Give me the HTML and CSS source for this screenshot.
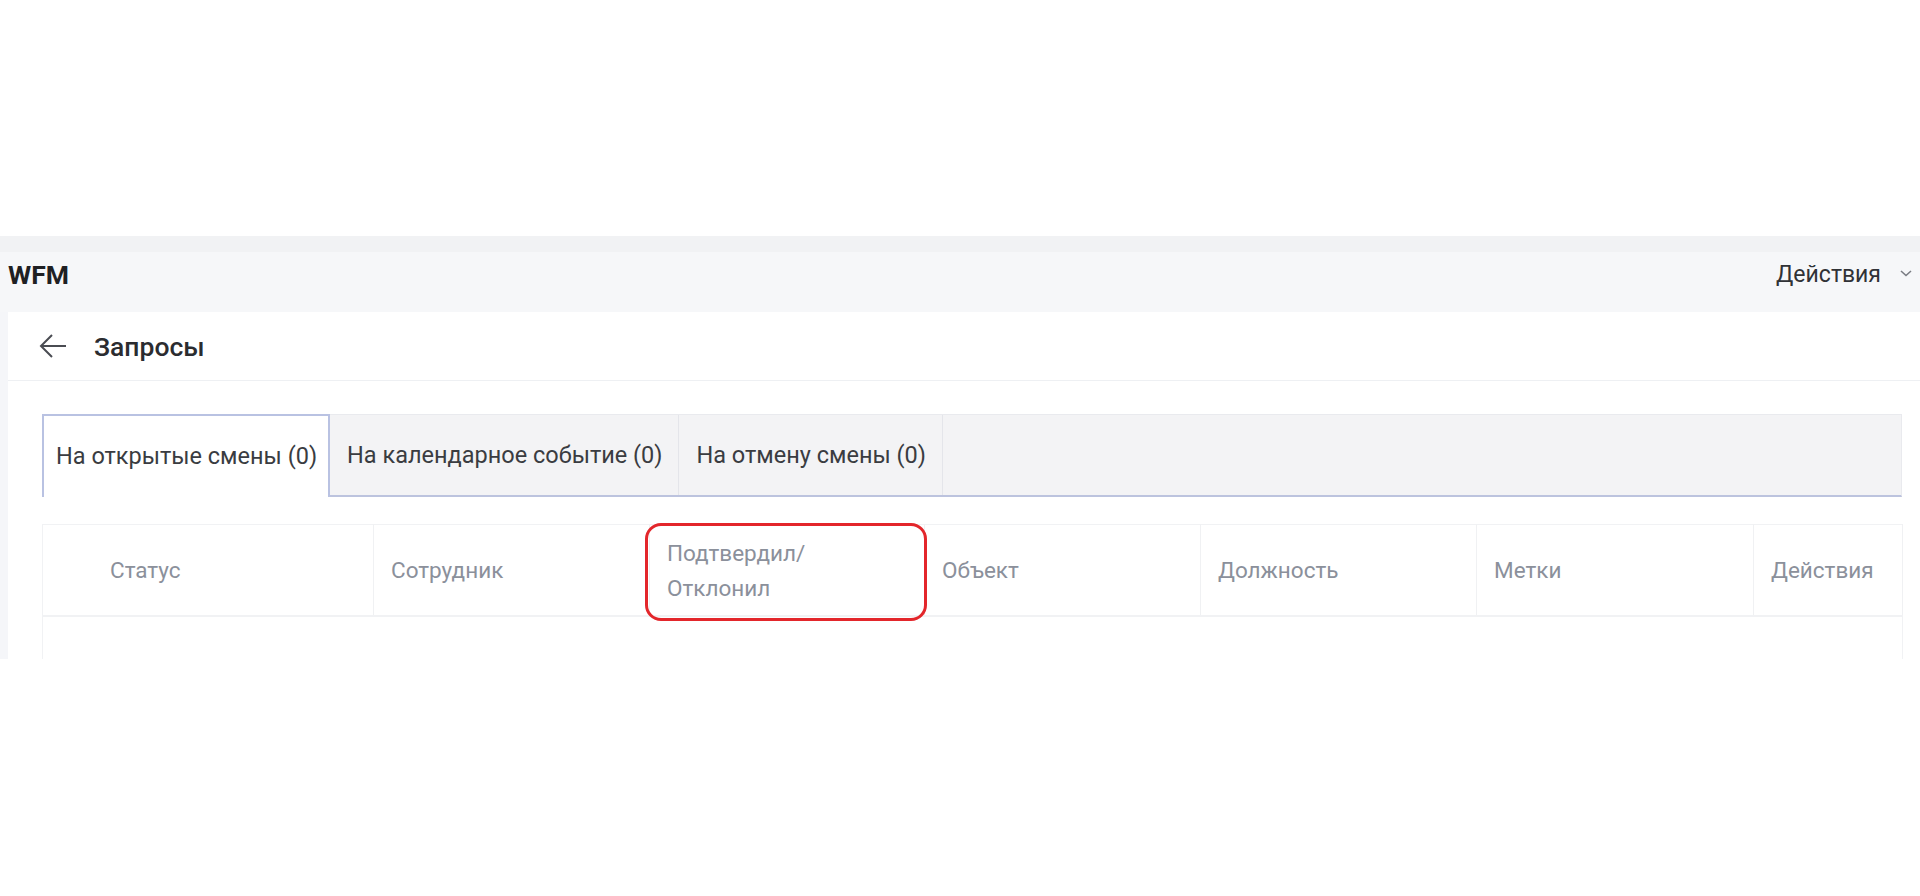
FILE: index.html
```html
<!DOCTYPE html>
<html lang="ru">
<head>
    <meta charset="UTF-8">
    <meta name="viewport" content="width=device-width, initial-scale=1.0">
    <title>WFM - Запросы</title>
    <link rel="stylesheet" href="styles.css">
</head>
<body>
    <div class="screen">
        <header class="topbar">
            <div class="logo">WFM</div>
            <div class="actions-menu">
                <span>Действия</span>
                <svg class="chevron" width="12" height="7" viewBox="0 0 12 7">
                    <path d="M1 1 L6 5.5 L11 1" fill="none" stroke="#7a7d84" stroke-width="1.6"/>
                </svg>
            </div>
        </header>

        <div class="card">
            <div class="card-head">
                <svg class="back" width="28" height="26" viewBox="0 0 28 26">
                    <path d="M27 13 H2 M13 2 L2 13 L13 24" fill="none" stroke="#4a4c52" stroke-width="2"/>
                </svg>
                <h1>Запросы</h1>
            </div>

            <div class="card-body">
                <div class="tabs">
                    <div class="tab active">На открытые смены (0)</div>
                    <div class="tab">На календарное событие (0)</div>
                    <div class="tab">На отмену смены (0)</div>
                </div>

                <table class="requests">
                    <colgroup>
                        <col style="width: 331px">
                        <col style="width: 276px">
                        <col style="width: 275px">
                        <col style="width: 276px">
                        <col style="width: 276px">
                        <col style="width: 277px">
                        <col style="width: 149px">
                    </colgroup>
                    <thead>
                        <tr>
                            <th class="first">Статус</th>
                            <th>Сотрудник</th>
                            <th class="marked">Подтвердил/<br>Отклонил<span class="highlight"></span></th>
                            <th>Объект</th>
                            <th>Должность</th>
                            <th>Метки</th>
                            <th>Действия</th>
                        </tr>
                    </thead>
                    <tbody>
                        <tr>
                            <td colspan="7"></td>
                        </tr>
                    </tbody>
                </table>
            </div>
        </div>
    </div>
</body>
</html>
```

FILE: styles.css
```css
body {
    margin: 0;
    background-color: #ffffff;
    font-family: Roboto, "Liberation Sans", Arial, sans-serif;
}

.screen {
    margin-top: 236px;
    height: 423px;
    overflow: hidden;
    background-color: #f5f6f9;
}

.topbar {
    height: 76px;
    display: flex;
    align-items: center;
    justify-content: space-between;
    padding: 0 8px 0 8px;
    background: linear-gradient(#f1f2f4 0, #f1f2f4 16px, #f6f7f9 16px);
}

.logo {
    font-size: 26.5px;
    font-weight: bold;
    color: #1f2023;
    margin-top: 1px;
}

.actions-menu {
    display: flex;
    align-items: center;
    gap: 19px;
    font-size: 23px;
    color: #303236;
}

.chevron {
    margin-top: -2px;
}

.card {
    margin-left: 8px;
    height: 347px;
    background-color: #ffffff;
}

.card-head {
    height: 68px;
    display: flex;
    align-items: center;
    padding-left: 31px;
    border-bottom: 1px solid #eef0f3;
}

.card-head h1 {
    margin: 0 0 0 27px;
    font-size: 26.5px;
    font-weight: 500;
    color: #2b2c30;
}

.card-body {
    padding: 33px 18px 0 34px;
}

.tabs {
    display: flex;
    height: 80px;
    background-color: #f3f3f5;
    border-top: 1px solid #e9eaee;
    border-right: 1px solid #e9eaee;
    border-bottom: 2px solid #bcc3de;
}

.tab {
    display: flex;
    align-items: center;
    padding: 0 16px 0 17px;
    font-size: 23.5px;
    color: #3a3c41;
    border-right: 1px solid #e4e5ea;
}

.tab.active {
    background-color: #ffffff;
    border: 2px solid #b9c2e2;
    border-bottom: none;
    margin-top: -1px;
    margin-bottom: -2px;
    padding: 0 11px 2px 12px;
}

.requests {
    margin-top: 27px;
    width: 1860px;
    table-layout: fixed;
    border-collapse: collapse;
    border: 1px solid #f1f2f4;
}

.requests th {
    height: 88px;
    padding: 0 17px;
    text-align: left;
    font-size: 22.5px;
    font-weight: normal;
    line-height: 35px;
    color: #8b909b;
    border-right: 1px solid #f0f1f3;
    border-bottom: 2px solid #f1f2f4;
}

.requests th.first {
    padding-left: 67px;
}

.requests th.marked {
    position: relative;
    padding-top: 2px;
}

.highlight {
    position: absolute;
    top: -2px;
    left: -5px;
    right: -3px;
    bottom: -6px;
    border: 3px solid #e3262b;
    border-radius: 16px;
}

.requests td {
    height: 60px;
}
```
